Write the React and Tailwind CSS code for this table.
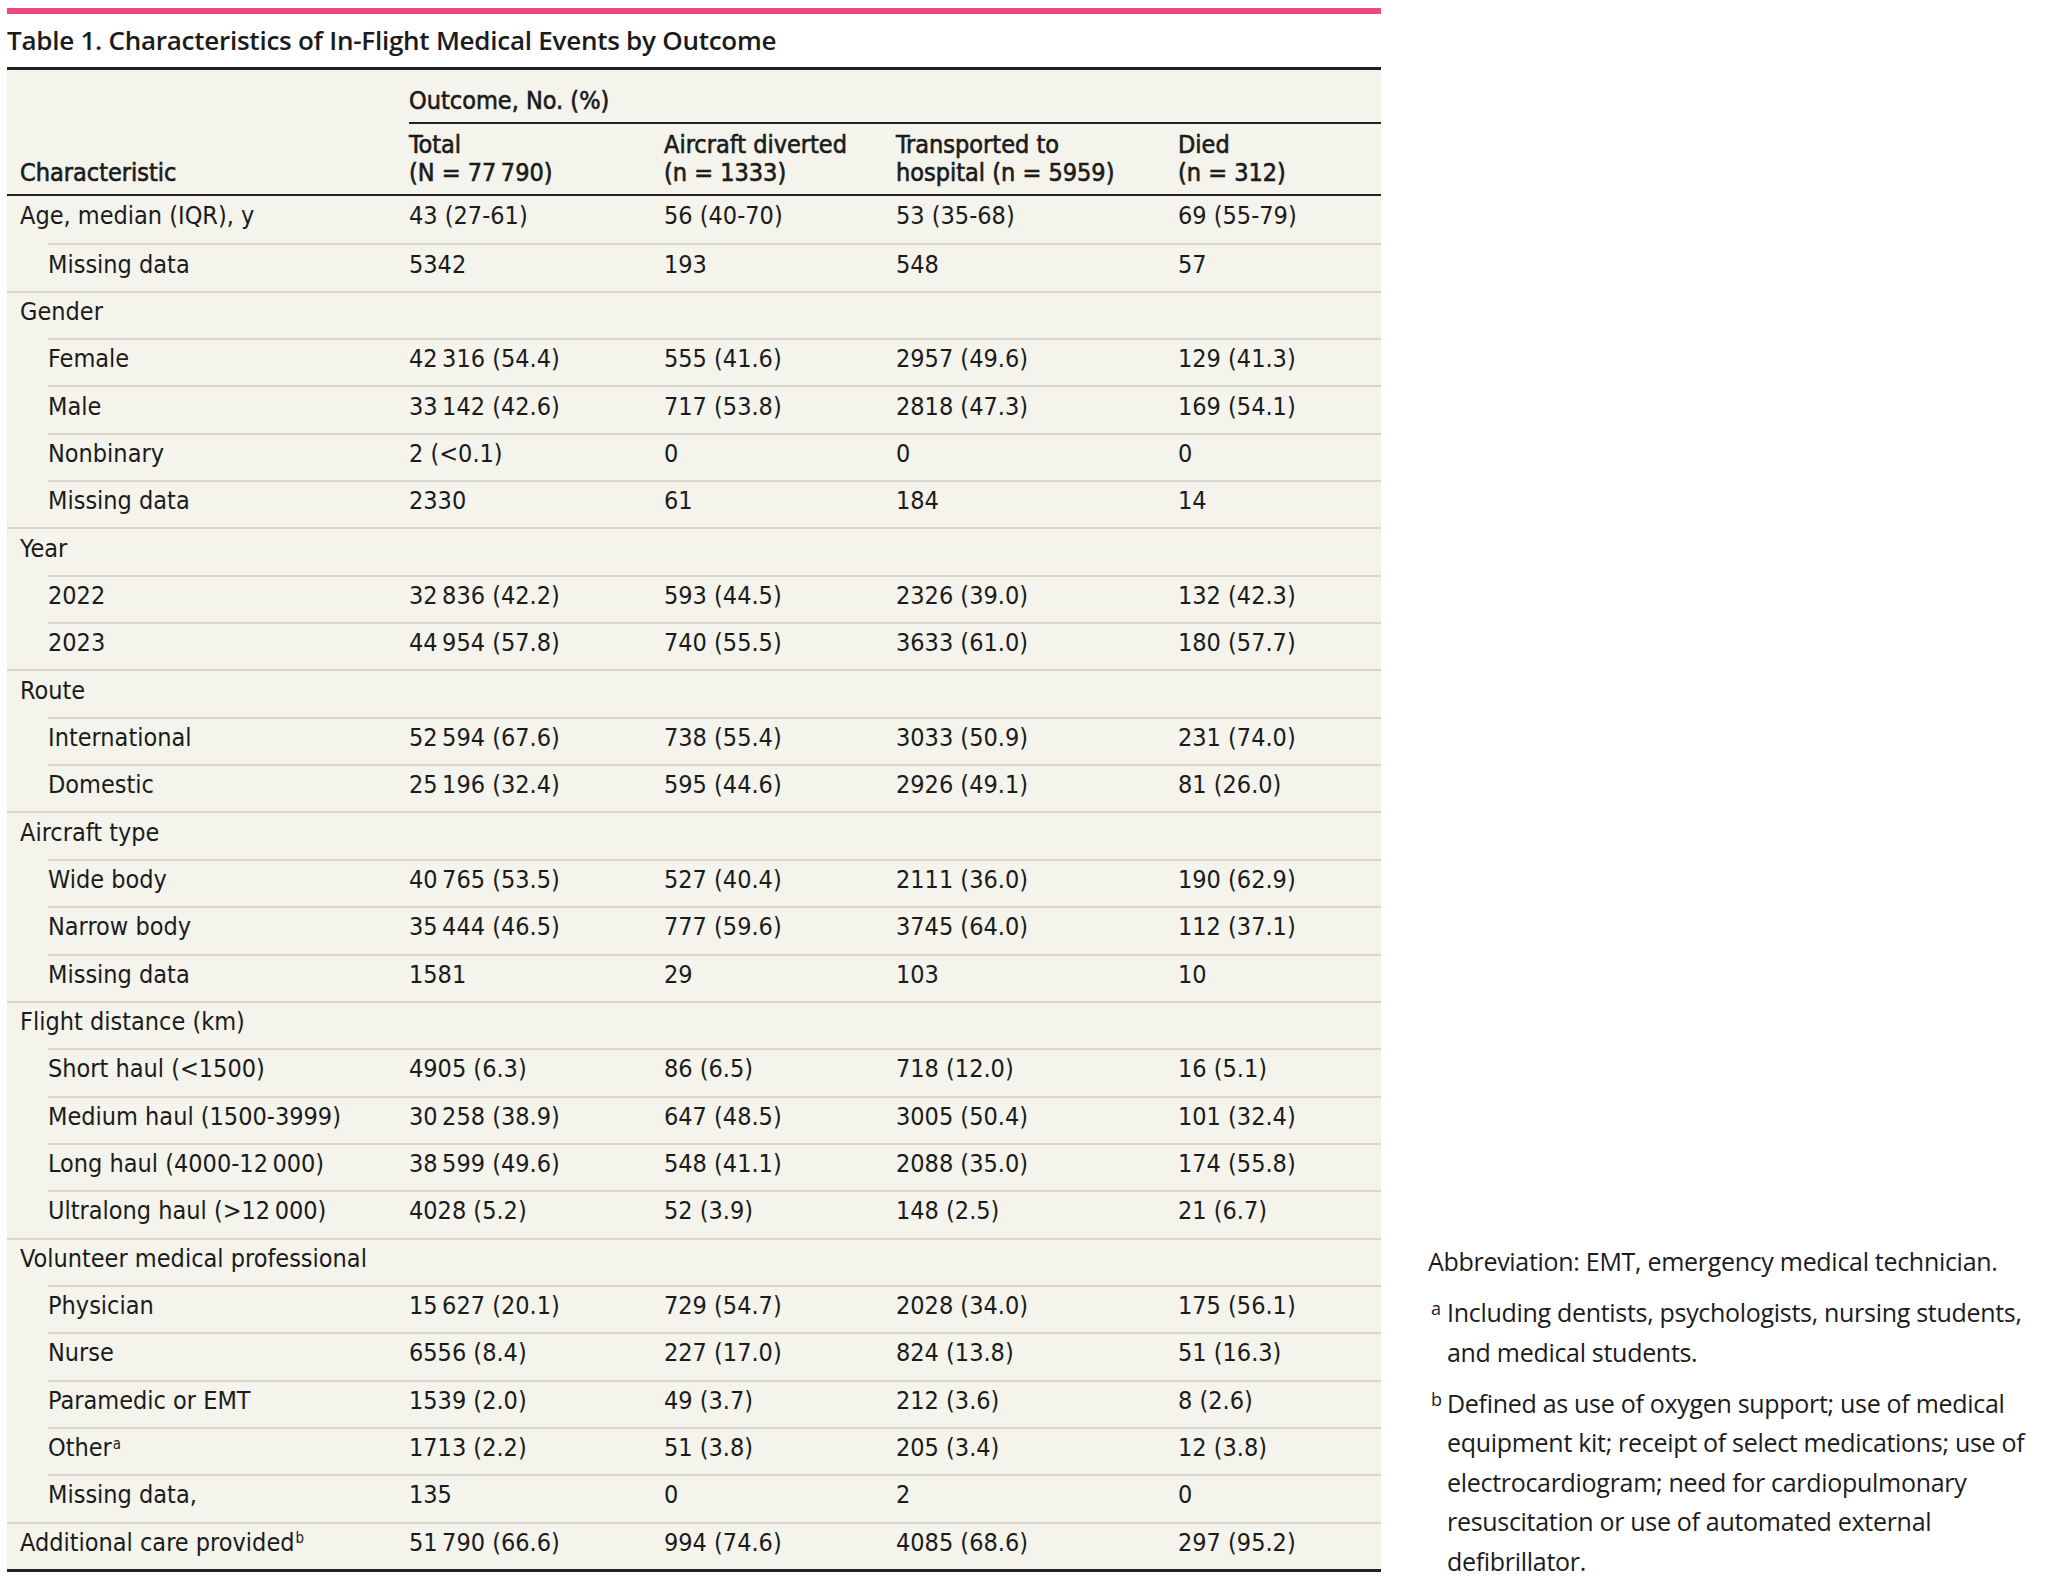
const T = "\u2009"

const rows = [
  { label: "Age, median (IQR), y", v: ["43 (27-61)", "56 (40-70)", "53 (35-68)", "69 (55-79)"] },
  { label: "Missing data", indent: true, v: ["5342", "193", "548", "57"] },
  { label: "Gender" },
  { label: "Female", indent: true, v: [`42${T}316 (54.4)`, "555 (41.6)", "2957 (49.6)", "129 (41.3)"] },
  { label: "Male", indent: true, v: [`33${T}142 (42.6)`, "717 (53.8)", "2818 (47.3)", "169 (54.1)"] },
  { label: "Nonbinary", indent: true, v: ["2 (<0.1)", "0", "0", "0"] },
  { label: "Missing data", indent: true, v: ["2330", "61", "184", "14"] },
  { label: "Year" },
  { label: "2022", indent: true, v: [`32${T}836 (42.2)`, "593 (44.5)", "2326 (39.0)", "132 (42.3)"] },
  { label: "2023", indent: true, v: [`44${T}954 (57.8)`, "740 (55.5)", "3633 (61.0)", "180 (57.7)"] },
  { label: "Route" },
  { label: "International", indent: true, v: [`52${T}594 (67.6)`, "738 (55.4)", "3033 (50.9)", "231 (74.0)"] },
  { label: "Domestic", indent: true, v: [`25${T}196 (32.4)`, "595 (44.6)", "2926 (49.1)", "81 (26.0)"] },
  { label: "Aircraft type" },
  { label: "Wide body", indent: true, v: [`40${T}765 (53.5)`, "527 (40.4)", "2111 (36.0)", "190 (62.9)"] },
  { label: "Narrow body", indent: true, v: [`35${T}444 (46.5)`, "777 (59.6)", "3745 (64.0)", "112 (37.1)"] },
  { label: "Missing data", indent: true, v: ["1581", "29", "103", "10"] },
  { label: "Flight distance (km)" },
  { label: "Short haul (<1500)", indent: true, v: ["4905 (6.3)", "86 (6.5)", "718 (12.0)", "16 (5.1)"] },
  { label: "Medium haul (1500-3999)", indent: true, v: [`30${T}258 (38.9)`, "647 (48.5)", "3005 (50.4)", "101 (32.4)"] },
  { label: `Long haul (4000-12${T}000)`, indent: true, v: [`38${T}599 (49.6)`, "548 (41.1)", "2088 (35.0)", "174 (55.8)"] },
  { label: `Ultralong haul (>12${T}000)`, indent: true, v: ["4028 (5.2)", "52 (3.9)", "148 (2.5)", "21 (6.7)"] },
  { label: "Volunteer medical professional" },
  { label: "Physician", indent: true, v: [`15${T}627 (20.1)`, "729 (54.7)", "2028 (34.0)", "175 (56.1)"] },
  { label: "Nurse", indent: true, v: ["6556 (8.4)", "227 (17.0)", "824 (13.8)", "51 (16.3)"] },
  { label: "Paramedic or EMT", indent: true, v: ["1539 (2.0)", "49 (3.7)", "212 (3.6)", "8 (2.6)"] },
  { label: "Other", sup: "a", indent: true, v: ["1713 (2.2)", "51 (3.8)", "205 (3.4)", "12 (3.8)"] },
  { label: "Missing data,", indent: true, v: ["135", "0", "2", "0"] },
  { label: "Additional care provided", sup: "b", v: [`51${T}790 (66.6)`, "994 (74.6)", "4085 (68.6)", "297 (95.2)"] },
]

const tableFont = "font-['DejaVu_Sans_Condensed','DejaVu_Sans',sans-serif] [font-stretch:condensed]"

function Row({ row, first }) {
  const cells = row.v || ["", "", "", ""]
  return (
    <div className={row.indent ? "pl-[41px]" : ""}>
      <div
        className={
          "grid h-[47.35px] items-center pb-[7px] " +
          (first ? "" : "border-t-2 border-[#ddd7cb] ") +
          (row.indent
            ? "grid-cols-[361px_255px_232px_282px_1fr]"
            : "grid-cols-[389px_255px_232px_282px_1fr] pl-[13px]")
        }
      >
        <div className="whitespace-nowrap">
          {row.label}
          {row.sup && <sup className="ml-[1px] text-[15px]">{row.sup}</sup>}
        </div>
        {cells.map((c, i) => (
          <div key={i} className="whitespace-nowrap">
            {c}
          </div>
        ))}
      </div>
    </div>
  )
}

export default function App() {
  return (
    <div className="flex h-[1578px] w-[2048px] overflow-hidden bg-white text-[#1b1b1b]">
      <div className="ml-[7px] w-[1374px] pt-[8px]">
        <div className="h-[6px] bg-[#ef4a7d]" />
        <div className="flex h-[53px] items-center font-['Open_Sans',sans-serif] text-[26px] font-semibold tracking-[-0.25px]">
          Table 1. Characteristics of In-Flight Medical Events by Outcome
        </div>
        <div className={"border-t-[3px] border-[#222] bg-[#f4f3ec] text-[25px] leading-[28px] " + tableFont}>
          <div className="border-b-2 border-[#222] [-webkit-text-stroke:0.6px_#1b1b1b]">
            <div className="flex h-[52px] items-end pb-[7px] pl-[402px]">Outcome, No. (%)</div>
            <div className="ml-[402px] h-[2px] bg-[#222]" />
            <div className="grid h-[70px] grid-cols-[402px_255px_232px_282px_1fr] items-center">
              <div className="flex h-[56px] items-end pl-[13px]">Characteristic</div>
              <div>
                <div>Total</div>
                <div>(N = 77{T}790)</div>
              </div>
              <div>
                <div>Aircraft diverted</div>
                <div>(n = 1333)</div>
              </div>
              <div>
                <div>Transported to</div>
                <div>hospital (n = 5959)</div>
              </div>
              <div>
                <div>Died</div>
                <div>(n = 312)</div>
              </div>
            </div>
          </div>
          <div className="border-b-[3px] border-[#222]">
            {rows.map((r, i) => (
              <Row key={i} row={r} first={i === 0} />
            ))}
          </div>
        </div>
      </div>
      <div className="ml-[47px] flex flex-1 flex-col justify-end font-['Open_Sans',sans-serif] text-[25px] leading-[39.4px] tracking-[-0.3px]">
        <p>Abbreviation: EMT, emergency medical technician.</p>
        <div className="mt-[12px] flex">
          <span className="w-[19px] shrink-0 pl-[3px] text-[18px] leading-[30px]">a</span>
          <p>
            Including dentists, psychologists, nursing students,
            <br />
            and medical students.
          </p>
        </div>
        <div className="mb-[-3px] mt-[12px] flex">
          <span className="w-[19px] shrink-0 pl-[3px] text-[18px] leading-[30px]">b</span>
          <p>
            Defined as use of oxygen support; use of medical
            <br />
            equipment kit; receipt of select medications; use of
            <br />
            electrocardiogram; need for cardiopulmonary
            <br />
            resuscitation or use of automated external
            <br />
            defibrillator.
          </p>
        </div>
      </div>
    </div>
  )
}
